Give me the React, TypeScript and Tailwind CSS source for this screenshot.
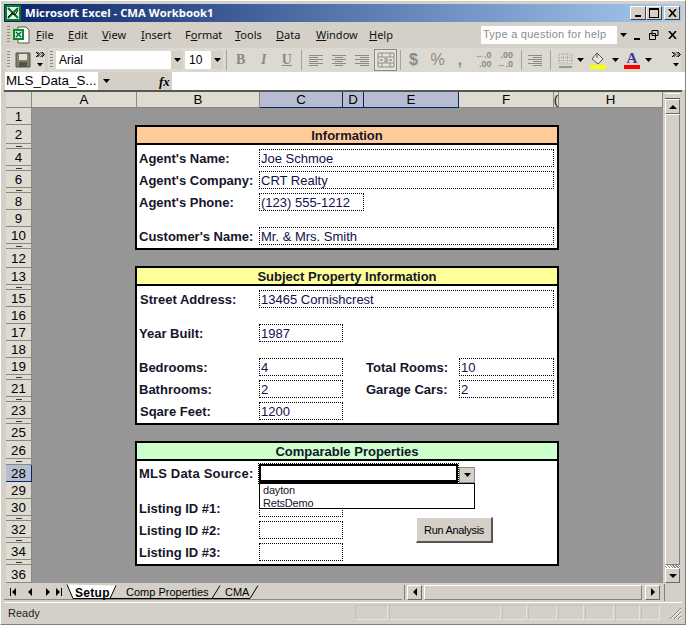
import React from "react";

const rows: [string, number, boolean?][] = [
  ["1", 17], ["2", 19], ["", 5], ["4", 17], ["", 5], ["6", 17], ["", 5], ["8", 17], ["9", 17], ["10", 17], ["", 5], ["12", 19], ["13", 17], ["", 5], ["15", 17], ["16", 17], ["17", 17], ["18", 17], ["19", 17], ["", 5], ["21", 17], ["", 5], ["23", 17], ["", 5], ["25", 17], ["26", 18], ["", 6], ["28", 17, true], ["29", 17], ["30", 17], ["", 5], ["32", 17], ["", 5], ["34", 17], ["", 5], ["36", 18],
];

const cols: [string, number, boolean?][] = [
  ["A", 105], ["B", 123], ["C", 83, true], ["D", 21, true], ["E", 95, true], ["F", 95], ["(", 5], ["H", 104],
];

function Field({ w, h = 18, text }: { w: number; h?: number; text?: string }) {
  return (
    <div style={{ width: w, height: h }} className="box-border flex items-center overflow-hidden whitespace-nowrap border border-dotted border-black pl-[1px] text-[13px] leading-none text-[#10104a]">
      {text}
    </div>
  );
}

function Label({ children, w = 120, left = 0 }: { children: React.ReactNode; w?: number; left?: number }) {
  return (
    <div style={{ width: w, paddingLeft: left }} className="shrink-0 whitespace-nowrap text-[13px] font-bold leading-none text-[#15152a]">
      {children}
    </div>
  );
}

function FormRow({ label, field, w = 295, top = 0, left = 0 }: { label: string; field?: string; w?: number; top?: number; left?: number }) {
  return (
    <div style={{ marginTop: top }} className="flex items-center pl-[2px]">
      <Label left={left}>{label}</Label>
      <Field w={w} text={field} />
    </div>
  );
}

function Panel({ title, color, h, top, children }: { title: string; color: string; h: number; top: number; children: React.ReactNode }) {
  return (
    <div style={{ height: h, marginTop: top }} className="relative box-border w-[424px] border-2 border-black bg-white">
      <div className={`box-border flex h-[18px] items-center justify-center border-b-2 border-black pt-[1px] text-[13px] font-bold leading-none text-[#15152a] ${color}`}>
        {title}
      </div>
      {children}
    </div>
  );
}

function Caret({ color = "#000" }: { color?: string }) {
  return <svg width="7" height="4" viewBox="0 0 7 4" className="shrink-0"><path d="M0 0h7L3.500 4z" fill={color} /></svg>;
}

function Chevrons() {
  return (
    <svg width="10" height="18" viewBox="0 0 10 18" className="shrink-0">
      <path d="M1 1l2.500 2.500L1 6M2.500 1L5 3.500 2.500 6M5.500 1L8 3.500 5.500 6M7 1l2.500 2.500L7 6" stroke="#000" fill="none" />
      <path d="M2 12h6l-3 3.500z" fill="#000" />
    </svg>
  );
}

function Grip() {
  return <div className="h-[18px] w-[3px] shrink-0 bg-[repeating-linear-gradient(to_bottom,#8a8880_0,#8a8880_1px,transparent_1px,transparent_3px)]" />;
}

function Sep() {
  return <div className="mx-[3px] h-[20px] w-px shrink-0 bg-[#a5a29a]" />;
}

function Lines({ align }: { align: "l" | "c" | "r" }) {
  const ys = [2, 4, 6, 8, 10, 12];
  const xs = { l: [[1, 15], [1, 10]], c: [[1, 15], [4, 12]], r: [[1, 15], [6, 15]] }[align];
  return (
    <svg width="16" height="15" viewBox="0 0 16 15" className="shrink-0">
      {ys.map((y, i) => { const p = xs[i % 2]; return <line key={y} x1={p[0]} x2={p[1]} y1={y + 0.5} y2={y + 0.5} stroke="#8c8a84" />; })}
    </svg>
  );
}

function Menu({ children, w }: { children: React.ReactNode; w: number }) {
  return <div style={{ width: w }} className="shrink-0 whitespace-nowrap pb-[2px]">{children}</div>;
}

function WinBtn({ children }: { children: React.ReactNode }) {
  return (
    <div className="flex h-[14px] w-[16px] items-center justify-center border border-b-[#404040] border-l-white border-r-[#404040] border-t-white bg-[#d4d0c8]">
      {children}
    </div>
  );
}

function ScrollBtn({ dir }: { dir: "up" | "down" | "left" | "right" }) {
  const d = { up: "M0 5h8L4 1z", down: "M0 1h8L4 5z", left: "M5 0v8L1 4z", right: "M1 0v8L5 4z" }[dir];
  const vert = dir === "up" || dir === "down";
  return (
    <div className="flex h-[15px] w-[15px] shrink-0 items-center justify-center border border-b-[#6b6a66] border-l-white border-r-[#6b6a66] border-t-white bg-[#d4d0c8]">
      <svg width={vert ? 8 : 6} height={vert ? 6 : 8} viewBox={vert ? "0 0 8 6" : "0 0 6 8"}><path d={d} fill="#000" /></svg>
    </div>
  );
}

export default function App() {
  return (
    <div className="box-border flex h-[625px] w-[686px] flex-col overflow-hidden border border-[#808080] border-l-white border-t-white bg-[#d4d0c8] p-[3px] pb-[2px] font-['Liberation_Sans',Arial,sans-serif] text-black">
      {/* Title bar */}
      <div className="flex h-[18px] shrink-0 items-center bg-[linear-gradient(to_right,#0a246a,#a6caf0)] pl-[1px] pr-[2px]">
        <svg width="16" height="16" viewBox="0 0 16 16" className="shrink-0">
          <rect width="16" height="16" fill="#0b7a2e" />
          <rect x="2" y="2" width="12" height="12" fill="#e8f3ea" />
          <path d="M3 3l10 10M13 3L3 13" stroke="#0b6a28" strokeWidth="2" />
          <path d="M3 12l4-4 3 2 3-5" stroke="#000" fill="none" />
        </svg>
        <div className="ml-[4px] flex-1 whitespace-nowrap font-['Open_Sans',sans-serif] text-[11.3px] font-bold leading-none text-white">Microsoft Excel - CMA Workbook1</div>
        <div className="flex">
          <WinBtn><div className="mt-[6px] h-[2px] w-[6px] bg-black" /></WinBtn>
          <WinBtn><div className="h-[10px] w-[10px] border border-t-2 border-black" /></WinBtn>
          <div className="w-[2px]" />
          <WinBtn><svg width="9" height="8" viewBox="0 0 9 8"><path d="M1 0l7 8M8 0L1 8" stroke="#000" strokeWidth="1.6" /></svg></WinBtn>
        </div>
      </div>

      {/* Menu bar */}
      <div className="mt-[2px] flex h-[22px] shrink-0 items-center font-['Noto_Sans',sans-serif] text-[11px] leading-none text-[#111]">
        <div className="ml-[3px] mr-[2px]"><Grip /></div>
        <svg width="18" height="18" viewBox="0 0 18 18" className="mr-[6px] shrink-0">
          <path d="M6 1h8l3 3v13H6z" fill="#fff" stroke="#555" />
          <rect x="1" y="3" width="11" height="11" fill="#0a8a2a" />
          <rect x="3" y="5" width="7" height="7" fill="#d8f0dc" />
          <path d="M4 6l5 5M9 6l-5 5" stroke="#064" strokeWidth="1.4" />
        </svg>
        <Menu w={32}><u>F</u>ile</Menu>
        <Menu w={34}><u>E</u>dit</Menu>
        <Menu w={39}><u>V</u>iew</Menu>
        <Menu w={44}><u>I</u>nsert</Menu>
        <Menu w={50}>F<u>o</u>rmat</Menu>
        <Menu w={41}><u>T</u>ools</Menu>
        <Menu w={40}><u>D</u>ata</Menu>
        <Menu w={53}><u>W</u>indow</Menu>
        <Menu w={20}><u>H</u>elp</Menu>
        <div className="ml-[92px] flex h-[18px] w-[148px] shrink-0 items-center bg-white pl-[2px] text-[#8c8c8c]">
          <span className="flex-1 whitespace-nowrap pb-[2px] font-['Liberation_Sans',sans-serif] text-[11px] tracking-[0.25px]">Type a question for help</span>
          <div className="flex h-[18px] w-[12px] items-center justify-center bg-[#d4d0c8]"><Caret /></div>
        </div>
        <div className="ml-[5px] flex w-[43px] shrink-0 items-center justify-between">
          <div className="mt-[7px] h-[2px] w-[6px] bg-black" />
          <svg width="10" height="10" viewBox="0 0 10 10"><path d="M3 .5h6v5H3zM.5 3.500h6v6h-6z" fill="#d4d0c8" stroke="#000" /></svg>
          <svg width="9" height="8" viewBox="0 0 9 8"><path d="M1 0l7 8M8 0L1 8" stroke="#000" strokeWidth="1.6" /></svg>
        </div>
      </div>

      {/* Toolbar */}
      <div className="mt-[2px] flex h-[24px] shrink-0 items-center gap-[3px] pl-[2px]">
        <div className="flex h-[24px] w-[39px] shrink-0 items-center rounded-[3px] bg-[#dcd9d1] pl-[1px]">
          <Grip />
          <svg width="16" height="16" viewBox="0 0 16 16" className="ml-[5px] shrink-0">
            <path d="M1 1h14v14H1z" fill="#82816a" stroke="#55544a" />
            <rect x="4" y="2" width="8" height="6" fill="#e4e2d8" />
            <rect x="4" y="10" width="8" height="5" fill="#55544a" />
          </svg>
          <div className="ml-[4px]"><Chevrons /></div>
        </div>
        <div className="flex h-[24px] w-[633px] shrink-0 items-center rounded-[3px] bg-[#dcd9d1] pl-[2px]">
          <Grip />
          <div className="ml-[3px] flex h-[18px] w-[127px] shrink-0 items-center bg-white pl-[3px] text-[12px]">
            <span className="flex-1">Arial</span>
            <div className="flex h-[18px] w-[12px] items-center justify-center bg-[#d4d0c8]"><Caret /></div>
          </div>
          <div className="ml-[2px] flex h-[18px] w-[38px] shrink-0 items-center bg-white pl-[4px] text-[12px]">
            <span className="flex-1">10</span>
            <div className="flex h-[18px] w-[12px] items-center justify-center bg-[#d4d0c8]"><Caret /></div>
          </div>
          <Sep />
          <div className="flex w-[68px] shrink-0 justify-between px-[6px] font-['Liberation_Serif',serif] text-[14px] font-bold leading-none text-[#8c8a84]">
            <span>B</span><span className="italic">I</span><span className="underline">U</span>
          </div>
          <Sep />
          <div className="ml-[3px] flex shrink-0 gap-[7px]"><Lines align="l" /><Lines align="c" /><Lines align="r" /></div>
          <div className="ml-[4px] flex h-[22px] w-[23px] shrink-0 items-center justify-center border border-[#8c8a84] bg-[#e6e4de]">
            <svg width="18" height="16" viewBox="0 0 18 16"><path d="M1 1h16v14H1zM1 5h16M1 11h16M5 1v4M13 1v4M5 11v4M13 11v4" fill="none" stroke="#8c8a84" /><path d="M3 8h3M12 8h3" stroke="#666" /><text x="9" y="10" fontSize="7" textAnchor="middle" fill="#666">a</text></svg>
          </div>
          <Sep />
          <div className="flex w-[59px] shrink-0 items-center justify-between pl-[5px] pr-[1px] text-[16px] font-bold leading-none text-[#8c8a84]">
            <span>$</span><span className="font-normal">%</span><span>,</span>
          </div>
          <div className="ml-[12px] flex w-[38px] shrink-0 justify-between text-[9px] font-bold leading-[9px] text-[#8c8a84]">
            <span className="whitespace-pre text-right">{"←.0\n.00"}</span>
            <span className="whitespace-pre text-right">{".00\n→.0"}</span>
          </div>
          <div className="ml-[5px]"><Sep /></div>
          <div className="ml-[2px]"><Lines align="r" /></div>
          <div className="ml-[4px]"><Sep /></div>
          <svg width="16" height="15" viewBox="0 0 16 15" className="ml-[4px] shrink-0">
            <path d="M1 1h13v10H1zM1 4.500h13M1 7.500h13M5 1v10M9.500 1v10" fill="none" stroke="#aaa79f" strokeDasharray="1 1" /><path d="M1 14h13" stroke="#555" />
          </svg>
          <div className="ml-[3px]"><Caret /></div>
          <div className="ml-[6px] flex shrink-0 flex-col items-center">
            <svg width="16" height="13" viewBox="0 0 16 13"><path d="M2 7l5-6 6 6-5 5z" fill="#e8e6de" stroke="#555" /><path d="M7 1v5" stroke="#555" /></svg>
            <div className="h-[4px] w-[16px] bg-[#ffff00]" />
          </div>
          <div className="ml-[6px]"><Caret /></div>
          <div className="ml-[5px] flex w-[16px] shrink-0 flex-col items-center">
            <div className="h-[13px] font-['Liberation_Serif',serif] text-[15px] font-bold leading-[13px] text-[#3a3a9a]">A</div>
            <div className="h-[4px] w-[16px] bg-[#ff0000]" />
          </div>
          <div className="ml-[5px]"><Caret /></div>
          <div className="ml-[19px]"><Chevrons /></div>
        </div>
      </div>

      {/* Formula bar */}
      <div className="mr-[-4px] flex h-[18px] shrink-0 items-center">
        <div className="ml-[1px] flex h-[18px] w-[93px] items-center whitespace-nowrap bg-white pl-[1px] text-[13.33px] leading-none">MLS_Data_S...</div>
        <div className="ml-[5px]"><Caret /></div>
        <div className="w-[49px]" />
        <div className="w-[10px] whitespace-nowrap font-['Liberation_Serif',serif] text-[13px] font-bold italic leading-none">fx</div>
        <div className="ml-[3px] h-[18px] flex-1 bg-white" />
      </div>

      {/* Grid + scrollbar */}
      <div className="flex min-h-0 flex-1 border-t-2 border-[#57564f]">
        <div className="flex min-w-0 flex-1 flex-col">
          {/* Column headers */}
          <div className="flex h-[16px] shrink-0 text-[13.33px] leading-none">
            <div className="ml-[2px] box-border h-[16px] w-[26px] shrink-0 border-b border-r border-[#8a887f] bg-[#dedbd3]" />
            {cols.map(([c, w, sel], i) => (
              <div key={i} style={{ width: w }} className={`box-border flex h-[16px] shrink-0 items-center justify-center overflow-hidden border-b border-r pt-[1px] ${sel ? "border-[#0a246a] bg-[#b6bdd2]" : "border-[#8a887f] bg-[#dedbd3]"}`}>
                {c}
              </div>
            ))}
          </div>
          {/* Row headers + sheet */}
          <div className="flex min-h-0 flex-1">
            <div className="ml-[2px] w-[26px] shrink-0 overflow-hidden">
              {rows.map(([r, h, sel], i) => (
                <div key={i} style={{ height: h }} className={`box-border flex items-center justify-center overflow-hidden border-b border-r text-[13.33px] leading-none ${r ? "pt-[2px]" : ""} ${sel ? "border-[#0a246a] bg-[#b6bdd2]" : "border-[#8a887f] bg-[#dedbd3]"}`}>
                  {r || <div className="h-[1px] w-[6px] bg-[#333]" />}
                </div>
              ))}
            </div>
            <div className="relative min-w-0 flex-1 bg-[#969696] pl-[103px]">
              <Panel title="Information" color="bg-[#ffcc99]" h={125} top={17}>
                <div className="pt-[4px]">
                  <FormRow label="Agent's Name:" field="Joe Schmoe" />
                  <FormRow label="Agent's Company:" field="CRT Realty" top={4} />
                  <FormRow label="Agent's Phone:" field="(123) 555-1212" w={105} top={4} />
                  <FormRow label="Customer's Name:" field="Mr. & Mrs. Smith" top={16} />
                </div>
              </Panel>
              <Panel title="Subject Property Information" color="bg-[#ffff99]" h={159} top={16}>
                <div className="pt-[4px]">
                  <FormRow label="Street Address:" field="13465 Cornishcrest" left={1} />
                  <FormRow label="Year Built:" field="1987" w={84} top={16} />
                  <div style={{ marginTop: 16 }} className="flex items-center pl-[2px]">
                    <Label>Bedrooms:</Label>
                    <Field w={84} text="4" />
                    <div className="ml-[23px]"><Label w={93}>Total Rooms:</Label></div>
                    <Field w={95} text="10" />
                  </div>
                  <div style={{ marginTop: 4 }} className="flex items-center pl-[2px]">
                    <Label>Bathrooms:</Label>
                    <Field w={84} text="2" />
                    <div className="ml-[23px]"><Label w={93}>Garage Cars:</Label></div>
                    <Field w={95} text="2" />
                  </div>
                  <FormRow label="Sqare Feet:" field="1200" w={84} top={4} left={1} />
                </div>
              </Panel>
              <Panel title="Comparable Properties" color="bg-[#ccffcc]" h={125} top={16}>
                <div className="pt-[3px]">
                  <div className="flex items-center pl-[2px]">
                    <Label><span className="tracking-[0.2px]">MLS Data Source:</span></Label>
                    <div className="box-border h-[19px] w-[199px] border-2 border-b-[3px] border-black outline-1 outline-dotted outline-black" />
                  </div>
                  <FormRow label="Listing ID #1:" w={84} top={16} />
                  <FormRow label="Listing ID #2:" w={84} top={4} />
                  <FormRow label="Listing ID #3:" w={84} top={4} />
                </div>
                {/* Combo drop-down, floats over the sheet */}
                <div className="absolute left-[322px] top-[24px] flex h-[16px] w-[16px] items-center justify-center border border-[#8a887f] bg-[#d4d0c8]"><Caret /></div>
                <div className="absolute left-[122px] top-[40px] box-border h-[26px] w-[216px] border border-black bg-white pl-[3px] text-[11px] leading-[13px] tracking-[-0.2px] text-[#15152a]">
                  <div>dayton</div>
                  <div>RetsDemo</div>
                </div>
                <div className="absolute left-[279px] top-[74px] box-border flex h-[26px] w-[77px] items-center justify-center border border-b-2 border-r-2 border-b-[#555] border-l-white border-r-[#555] border-t-white bg-[#d4d0c8] pt-[2px] text-[11px] leading-none tracking-[-0.3px]">Run Analysis</div>
              </Panel>
            </div>
          </div>
        </div>
        {/* Vertical scrollbar */}
        <div className="flex w-[19px] shrink-0 flex-col items-end bg-[#d4d0c8] pr-[2px] pt-[1px]">
          <div className="h-[6px] w-[15px] border-y border-b-[#57564f] border-t-white" />
          <ScrollBtn dir="up" />
          <div className="box-border w-[15px] flex-1 border border-b-[#808080] border-l-white border-r-[#808080] border-t-white" />
          <div className="h-[3px] w-[15px] bg-[repeating-linear-gradient(45deg,#fff_0,#fff_1px,#888_1px,#888_2px)]" />
          <ScrollBtn dir="down" />
        </div>
      </div>

      {/* Sheet tabs + horizontal scrollbar */}
      <div className="flex h-[18px] shrink-0 items-center">
        <div className="relative flex h-[18px] w-[398px] shrink-0 items-center text-[11px] leading-none">
          <svg width="398" height="18" viewBox="0 0 398 18" className="absolute left-0 top-0">
            <path d="M0 16.500h398" stroke="#888" />
            <path d="M63 1.500l6 14h37l6-13" fill="#fff" stroke="#000" />
            <path d="M106 15.500h102l8-13" fill="none" stroke="#000" />
            <path d="M208 15.500h38l8-13" fill="none" stroke="#000" />
          </svg>
          <svg width="54" height="10" viewBox="0 0 54 10" className="relative ml-[5px] shrink-0">
            <path d="M1 1v8h1V1zM7 1v8L3 5zM23 1v8l-4-4zM37 1v8l4-4zM53 1v8h-1V1zM47 1v8l4-4z" fill="#000" />
          </svg>
          <span className="relative ml-[12px] w-[34px] pt-[1px] text-[12px] font-bold tracking-[0.3px]">Setup</span>
          <span className="relative ml-[17px] w-[79px] whitespace-nowrap pt-[1px]">Comp Properties</span>
          <span className="relative ml-[20px] pt-[1px]">CMA</span>
        </div>
        <div className="ml-[2px] h-[15px] w-px shrink-0 bg-[#808080]" />
        <div className="ml-[2px] flex flex-1 items-center">
          <ScrollBtn dir="left" />
          <div className="ml-[2px] box-border h-[15px] w-[218px] shrink-0 border border-b-[#808080] border-l-white border-r-[#808080] border-t-white" />
          <div className="w-[3px]" />
          <ScrollBtn dir="right" />
          <div className="ml-[4px] h-[17px] w-[1px] bg-[#808080]" />
        </div>
      </div>

      {/* Status bar */}
      <div className="mt-[1px] flex h-[20px] shrink-0 items-center border-t border-white text-[11px] leading-none">
        <span className="ml-[4px] flex-1 pt-[2px] text-[#222]">Ready</span>
        <div className="flex h-[15px] gap-[1px] pr-[8px]">
          {[33, 112, 25, 29, 26, 29, 25, 19].map((w, i) => (
            <div key={i} style={{ width: w }} className="border border-[#c4c1b9] border-b-[#e6e4de] border-r-[#e6e4de]" />
          ))}
        </div>
        <svg width="14" height="14" viewBox="0 0 14 14" className="shrink-0">
          <path d="M13 2L2 13M13 6l-7 7M13 10l-3 3" stroke="#808080" fill="none" />
          <path d="M13 3L3 13M13 7l-6 6M13 11l-2 2" stroke="#fff" fill="none" />
        </svg>
      </div>
    </div>
  );
}
